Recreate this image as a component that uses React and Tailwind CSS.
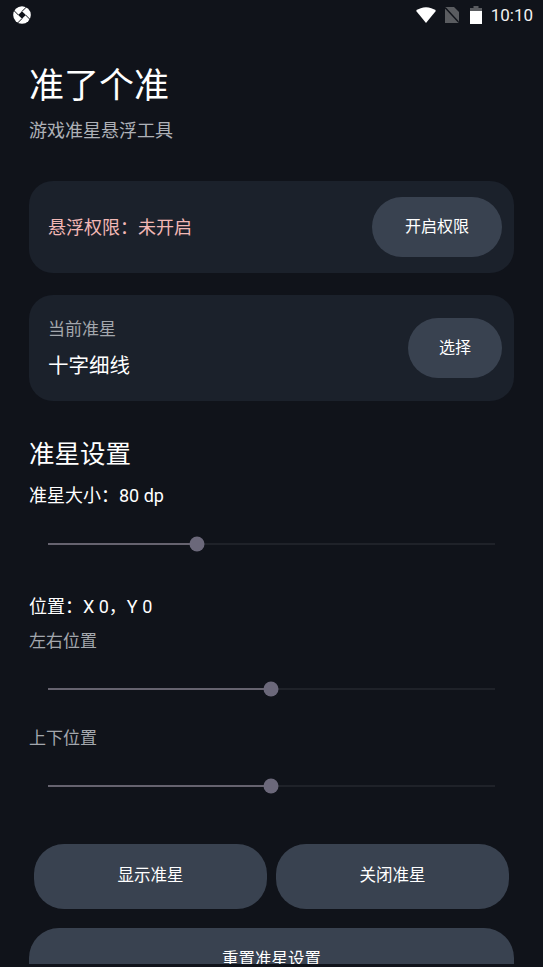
const cjk = { fontFamily: '"Roboto", "Noto Sans CJK SC", sans-serif' };

const Slider = ({ percent }) => (
  <div className="relative mx-[19px] h-[2px] bg-[#1f2229]">
    <div className="h-full bg-[#66636f]" style={{ width: `${percent}%` }} />
    <div
      className="absolute top-1/2 size-[15px] -translate-x-1/2 -translate-y-1/2 rounded-full bg-[#6b687a]"
      style={{ left: `${percent}%` }}
    />
  </div>
);

const App = () => {
  return (
    <div className="h-[967px] w-[543px] bg-[#10131a] text-white" style={cjk}>
      <div className="h-[964px] overflow-hidden">
        {/* status bar */}
        <div className="flex h-[30px] items-center justify-between pl-[13px] pr-[10px]">
          <svg width="18" height="18" viewBox="0 0 18 18">
            <circle cx="9" cy="9" r="8.8" fill="white" />
            <path d="M9 5.2 12.8 9 9 12.8 5.2 9Z" fill="#10131a" />
            <path
              d="M9 5.4 15 -.6M12.6 9 18.6 15M9 12.6 3 18.6M5.4 9 -.6 3"
              fill="none"
              stroke="#10131a"
              strokeWidth="1"
            />
          </svg>
          <div className="flex items-center">
            <svg width="20" height="16" viewBox="0 0 20 16" fill="white">
              <path d="M0 3.8C5.5-1 14.5-1 20 3.8L10 16Z" />
            </svg>
            <svg className="ml-[9px]" width="14" height="16" viewBox="0 0 14 16">
              <path d="M0 0H9L14 5V16H0Z" fill="#5a5c60" />
              <path d="M0 0.5L14 15.5" stroke="#10131a" strokeWidth="1.5" />
            </svg>
            <svg className="ml-[11px]" width="12" height="18" viewBox="0 0 12 18">
              <path d="M3.5 0H8.5V2H12V5H0V2H3.5Z" fill="#5a5c60" />
              <path d="M0 5H12V18H0Z" fill="white" />
            </svg>
            <span
              className="ml-[9px] text-[17px] leading-none text-[#f2f2f2]"
              style={{ fontFamily: "Roboto, sans-serif" }}
            >
              10:10
            </span>
          </div>
        </div>

        <main className="px-[29px]">
          <h1 className="mt-[33px] text-[35px] leading-[48px] font-normal">准了个准</h1>
          <p className="mt-[8px] text-[18px] leading-[24px] text-[#aeb1b7]">游戏准星悬浮工具</p>

          <section className="mt-[38px] flex h-[92px] items-center justify-between rounded-[24px] bg-[#1b212b] pl-[19px] pr-[12px]">
            <span className="text-[18px] text-[#f2b8b5]">悬浮权限：未开启</span>
            <button className="h-[60px] w-[130px] rounded-full bg-[#394250] text-[16px]">开启权限</button>
          </section>

          <section className="mt-[22px] flex h-[106px] items-center justify-between rounded-[24px] bg-[#1b212b] pl-[19px] pr-[12px]">
            <div className="pt-[2px]">
              <div className="text-[17px] leading-[22px] text-[#a3a7ad]">当前准星</div>
              <div className="mt-[12px] text-[20.5px] leading-[28px]">十字细线</div>
            </div>
            <button className="h-[60px] w-[94px] rounded-full bg-[#394250] text-[16px]">选择</button>
          </section>

          <h2 className="mt-[35px] text-[25.5px] leading-[36px] font-normal">准星设置</h2>
          <p className="mt-[12px] text-[18px] leading-[24px]">准星大小：80 dp</p>
          <div className="mt-[35px]">
            <Slider percent={33.4} />
          </div>

          <p className="mt-[50px] text-[18px] leading-[24px]">位置：X 0，Y 0</p>
          <p className="mt-[11px] text-[17px] leading-[22px] text-[#a3a7ad]">左右位置</p>
          <div className="mt-[36px]">
            <Slider percent={49.9} />
          </div>
          <p className="mt-[37px] text-[17px] leading-[22px] text-[#a3a7ad]">上下位置</p>
          <div className="mt-[36px]">
            <Slider percent={49.9} />
          </div>

          <div className="mt-[57px] flex justify-between px-[5px]">
            <button className="h-[65px] w-[233px] rounded-[30px] bg-[#394250] text-[16.5px]">显示准星</button>
            <button className="h-[65px] w-[233px] rounded-[30px] bg-[#394250] text-[16.5px]">关闭准星</button>
          </div>
          <button className="mt-[19px] h-[65px] w-full rounded-[30px] bg-[#394250] text-[16.5px]">重置准星设置</button>
        </main>
      </div>
    </div>
  );
};

export default App;
